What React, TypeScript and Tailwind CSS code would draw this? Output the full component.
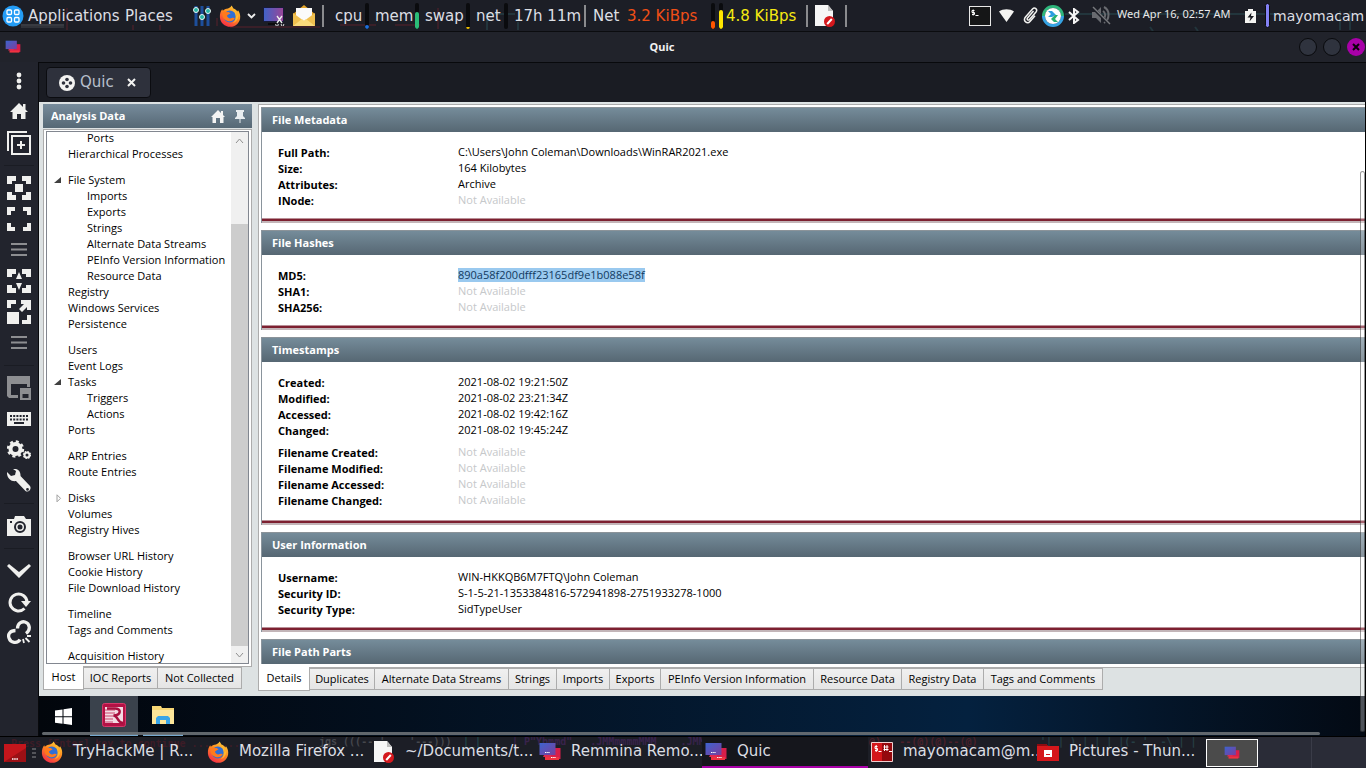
import React from "react";

type Children = { children?: React.ReactNode };

const remoteFont = "font-['Open_Sans','Noto_Sans',sans-serif]";
const panelFont = "font-['DejaVu_Sans',sans-serif]";

function Svg({ w, h, box, children, label }: { w: number; h: number; box?: string; label?: string } & Children) {
  return (
    <svg width={w} height={h} viewBox={box ?? `0 0 ${w} ${h}`} className="block shrink-0" aria-hidden={label ? undefined : true} aria-label={label}>
      {children}
    </svg>
  );
}

/* ---------- shared icons ---------- */

function Firefox({ id }: { id: string }) {
  return (
    <Svg w={22} h={22}>
      <defs>
        <linearGradient id={id} x1="0.8" y1="0" x2="0.2" y2="1">
          <stop offset="0" stopColor="#ffd43c" />
          <stop offset="0.45" stopColor="#ff8a1f" />
          <stop offset="1" stopColor="#f5254a" />
        </linearGradient>
      </defs>
      <path d="M12.5 0.5c1.2 1.4 1.5 2.4 2 3 1.8.6 3 1.800 3.800 3l.7-1.300c1.700 2.300 2.600 5 2.100 8.300C20.300 18.300 16.300 21.800 11.300 21.800 5.600 21.800 1.200 17.700.9 12.200.7 8.700 1.800 6 3.200 4.200l.7 1.600C5 4.500 6 4 7.500 3.700 9.500 3.400 11.500 2.800 12.500.5z" fill={`url(#${id})`} />
      <circle cx="10.800" cy="11.500" r="6" fill="#2f6fd6" />
      <path d="M3.500 8c1.500-2 3-2 4.500-.8 1.500-.4 2.500.3 3.500 1.300-2 .5-2.300 1.500-3.500 2 .2 2.300 2.500 3.500 4.800 2.600 1.200-.5 2.200-.3 3 .2-1.200 2.600-4.500 3.500-7.300 2.600C5 14.600 3 12 3.500 8z" fill="#ff7a1c" />
      <path d="M14 4.500c2.500 1.500 4 4 3.500 7 1-.8 1.500-2 1.500-3.200 1.200 4.500-1.500 9-5.500 10.200 4.500-3.500 4-9 .5-14z" fill="#ffc531" opacity=".75" />
    </Svg>
  );
}

function BlockedDoc() {
  return (
    <Svg w={22} h={24}>
      <path d="M1 1h13l5 6v15H1z" fill="#f6f6f6" />
      <path d="M14 1v6h5z" fill="#bdbdbd" />
      <circle cx="15.500" cy="17.500" r="5.500" fill="#d4181d" />
      <path d="M13.200 20l4.600-5" stroke="#fff" strokeWidth="2" />
    </Svg>
  );
}

function Remmina({ id, small }: { id: string; small?: boolean }) {
  return (
    <Svg w={small ? 16 : 22} h={small ? 14 : 20} box="0 0 22 20">
      <defs>
        <linearGradient id={id} x1="0" y1="0" x2="1" y2="1">
          <stop offset="0" stopColor="#3d63cf" />
          <stop offset="1" stopColor="#7a3f9d" />
        </linearGradient>
      </defs>
      <rect x="7" y="6" width="14.500" height="11" fill="#d81e4a" />
      <path d="M6 15h14v3H6z" fill="#ef3340" />
      <rect x="0.500" y="1" width="16" height="12" fill={`url(#${id})`} />
      <path d="M5 13h7v2H4z" fill="#e02a50" />
      {!small && <path d="M6 10.500h5M12 15.500h5" stroke="#fff" strokeDasharray="1.500 .7" />}
    </Svg>
  );
}

/* ---------- top panel ---------- */

function Label({ w, children, color = "text-[#dcdfe4]" }: { w: string; color?: string } & Children) {
  return <span className={`${w} ${color} shrink-0 whitespace-nowrap`}>{children}</span>;
}

function Meter({ fill, color }: { fill: string; color: string }) {
  return (
    <span className="flex h-[26px] w-1 shrink-0 items-end overflow-hidden rounded-sm bg-[#0a0b0e]">
      <span className={`w-full rounded-sm ${fill} ${color}`} />
    </span>
  );
}

function Divider() {
  return <span className="h-[22px] w-0.5 shrink-0 bg-[#8a8b8e]" />;
}

function TopPanel() {
  return (
    <header className={`${panelFont} relative flex h-8 shrink-0 items-center justify-between overflow-hidden border-b border-[#0b0c0f] bg-[#1c1e26] text-[15px]`}>
      <div className="absolute left-0 top-0 h-full w-full" aria-hidden="true">
        <svg className="h-full w-full">
          <g stroke="#47202a" strokeWidth="2" fill="none" opacity=".7">
            <path d="M67 8v22M133 25v5M160 25v5M217 18v8M230 27h90M340 25h36M395 25h25M438 8v21" />
          </g>
          <path d="M21 25h43" stroke="#55575c" />
          <path d="M21 27h43" stroke="#45474c" />
          <g stroke="#253f46" strokeWidth="2" fill="none" opacity=".7">
            <path d="M485 14h30M487 14v16M518 22v8M1065 14h210M1150 27l3 4M1195 27l3 4M1340 11v19M1350 11v19" />
          </g>
        </svg>
      </div>
      <div className="relative flex items-center pt-px">
        <button className="flex w-[122px] items-center gap-1 pl-[2px] text-[#dcdfe4]">
          <Svg w={22} h={22}>
            <circle cx="11" cy="11" r="10.500" fill="#239cf5" />
            <g fill="none" stroke="#fff" strokeWidth="1.300">
              <rect x="5" y="5" width="4.500" height="4.500" rx="1" />
              <rect x="12.500" y="5" width="4.500" height="4.500" rx="1" />
              <rect x="5" y="12.500" width="4.500" height="4.500" rx="1" />
              <rect x="12.500" y="12.500" width="4.500" height="4.500" rx="1" />
            </g>
          </Svg>
          Applications
        </button>
        <button className="w-[68px] pl-[3px] text-left text-[#dcdfe4]">Places</button>
        <button aria-label="Mixer" className="w-[28px] pl-[2px]">
          <Svg w={20} h={22}>
            <path d="M4 1v20M10 1v20M16 1v20" stroke="#1d4f9c" strokeWidth="3" />
            <g fill="#27b5a5" stroke="#e8f4f4" strokeWidth="1">
              <circle cx="4" cy="5" r="2.500" /><circle cx="10" cy="12" r="2.500" /><circle cx="16" cy="6" r="2.500" />
            </g>
          </Svg>
        </button>
        <button aria-label="Firefox" className="w-[29px] pl-[1px]"><Firefox id="ff0" /></button>
        <button aria-label="More browsers" className="w-[16px]">
          <Svg w={9} h={6}><path d="M1 1l3.500 3.500L8 1" fill="none" stroke="#eee" strokeWidth="1.800" /></Svg>
        </button>
        <button aria-label="Screenshot" className="w-[30px]">
          <Svg w={22} h={20}>
            <defs><linearGradient id="shot"><stop stopColor="#3f63c8" /><stop offset="1" stopColor="#9b4597" /></linearGradient></defs>
            <rect x="0.500" y="1.500" width="20" height="14" fill="url(#shot)" stroke="#181a3a" />
            <path d="M5 18h9" stroke="#0b0b0d" strokeWidth="2" />
            <path d="M14 10l5 7M19 10l-5 7" stroke="#eee" strokeWidth="1.300" />
            <path d="M13 18a1.300 1.300 0 1 0 2 0M18.500 18a1.300 1.300 0 1 0 2 0" stroke="#ddd" fill="none" />
          </Svg>
        </button>
        <button aria-label="Mail" className="w-[29px]">
          <Svg w={22} h={22}>
            <path d="M0 9l11-9 11 9v12H0z" fill="#e3a52b" />
            <path d="M3 3h16v9l-8 5-8-5z" fill="#fbfbfb" />
            <path d="M0 8l11 8 11-8v13H0z" fill="#f0c050" />
            <path d="M0 21l9-7 2 2 2-2 9 7z" fill="#fadb7c" />
          </Svg>
        </button>
        <Divider />
        <Label w="w-[41px] pl-[11px]">cpu</Label>
        <Meter fill="h-[4px]" color="bg-[#1f6fdc]" />
        <Label w="w-[46px] pl-[6px]">mem</Label>
        <Meter fill="h-[17px]" color="bg-[#2bbd78]" />
        <Label w="w-[47px] pl-[6px]">swap</Label>
        <Meter fill="h-[2px]" color="bg-[#f2c200]" />
        <Label w="w-[34px] pl-[6px]">net</Label>
        <Meter fill="h-0" color="bg-black" />
        <Label w="w-[76px] pl-[6px]">17h 11m</Label>
        <Divider />
        <Label w="w-[41px] pl-[7px]">Net</Label>
        <Label w="w-[84px]" color="text-[#f04f16]">3.2 KiBps</Label>
        <Meter fill="h-[8px]" color="bg-[#ff5500]" />
        <span className="w-1" />
        <Meter fill="h-[19px]" color="bg-[#ffe600]" />
        <Label w="w-[83px] pl-[3px]" color="text-[#f5ea12]">4.8 KiBps</Label>
        <Divider />
        <span className="w-[37px] pl-[6px]"><BlockedDoc /></span>
        <Divider />
      </div>
      <div className="relative flex items-center">
        <button aria-label="Terminal" className="w-[30px]">
          <Svg w={22} h={20}>
            <rect x="0.500" y="0.500" width="21" height="19" fill="#151617" stroke="#e8e8e8" />
            <path d="M5.500 4.500H3v2h2.500v2H3M4.200 3.500v6M6.500 9.500h3" stroke="#fff" fill="none" />
          </Svg>
        </button>
        <span className="w-[24px]"><Svg w={15} h={13}><path d="M0 2.500C4-.5 11-.5 15 2.500L7.500 13z" fill="#f4f4f2" /></Svg></span>
        <span className="w-[19px]">
          <Svg w={15} h={17}><path d="M10.500 4L4.500 11c-1 1.500.8 2.800 2 1.500l6.500-7.500c2-2.800-1.300-5.300-3.500-3L2.500 10c-3 4 1.800 7.500 4.500 4.500l5-5.800" fill="none" stroke="#f2f2f0" strokeWidth="1.500" /></Svg>
        </span>
        <span className="w-[26px]">
          <Svg w={22} h={22}>
            <path d="M1.500 11a9.500 9.500 0 0 1 19 0" fill="none" stroke="#2fb67c" strokeWidth="3" />
            <path d="M1.500 11a9.500 9.500 0 0 0 19 0" fill="none" stroke="#36a3e3" strokeWidth="3" />
            <circle cx="11" cy="11" r="8" fill="#fff" />
            <path d="M6 6h4l4 4-4 2H6l3-3z" fill="#2d9ee0" /><path d="M16 10h-3l-4 4 3 3h4l-3-3z" fill="#28b070" />
          </Svg>
        </span>
        <span className="w-[23px]"><Svg w={12} h={16}><path d="M1 4l9 8-4 3V1l4 3-9 8" fill="none" stroke="#f4f4f4" strokeWidth="2" /></Svg></span>
        <span className="w-[26px]">
          <Svg w={20} h={19}>
            <path d="M1 6h4l5-5v16l-5-5H1z" fill="#696b70" />
            <path d="M12 5c3 2 3 6 0 8M13 1c6 3 6 12 0 16" fill="none" stroke="#696b70" strokeWidth="2" />
            <path d="M1 1l17 17" stroke="#1c1e26" strokeWidth="3" /><path d="M2 1l17 17" stroke="#77797d" strokeWidth="1.500" />
          </Svg>
        </span>
        <time className="w-[128px] whitespace-nowrap pb-[3px] font-['Noto_Sans',sans-serif] text-[11px] text-[#e9e9e9]">Wed Apr 16, 02:57 AM</time>
        <span className="w-[20px]"><Svg w={11} h={14}><path d="M0 2h3V0h5v2h3v12H0z" fill="#f4f4f2" /><path d="M6.500 3.500L2.500 8.500h3l-1 4 4.500-5.500H6z" fill="#17191f" /></Svg></span>
        <span className="h-[25px] w-[5px] rounded-sm border border-[#0b0c10] bg-[#8381f4]" />
        <span className="w-[96px] whitespace-nowrap pl-[3px] text-sm text-[#dcdfe4]">mayomacam</span>
      </div>
    </header>
  );
}

function TitleBar() {
  return (
    <div className="flex h-[30px] shrink-0 items-center justify-between bg-[#21232b] pl-[5px]">
      <div className="w-5"><Remmina id="rm0" small /></div>
      <h1 className="font-['Noto_Sans',sans-serif] text-[11px] font-bold text-[#f1f1f1]">Quic</h1>
      <div className="flex w-[67px] gap-[6px]">
        <button aria-label="Minimise" className="size-[18px] shrink-0 rounded-full border border-[#090a0d] bg-[#2f333e]" />
        <button aria-label="Maximise" className="size-[18px] shrink-0 rounded-full border border-[#090a0d] bg-[#2f333e]" />
        <button aria-label="Close" className="flex size-[18px] shrink-0 items-center justify-center rounded-full bg-[#a800a8]">
          <Svg w={8} h={8}><path d="M1 1l6 6M7 1L1 7" stroke="#08000a" strokeWidth="2" /></Svg>
        </button>
      </div>
    </div>
  );
}

/* ---------- Remmina side toolbar ---------- */

const corners = "M0 8V0h9v5H5v3zM15 0h9v8h-5V5h-4zM0 16h5v3h4v5H0zM19 16h5v8h-9v-5h4z";

function ToolButton({ label, children }: { label: string } & Children) {
  return <button aria-label={label} className="flex h-[31px] items-center justify-center">{children}</button>;
}

function ToolGap() {
  return <span className="flex h-[14px] items-center px-1"><span className="h-px w-full bg-[#1a1c23]" /></span>;
}

function Toolbar() {
  const on = "#f0f0ee";
  const off = "#8d8e91";
  const lines = <Svg w={16} h={15}><path d="M0 2h16M0 7.500h16M0 13h16" stroke={off} strokeWidth="2" /></Svg>;
  return (
    <nav aria-label="Connection tools" className="flex w-[38px] shrink-0 flex-col bg-[#22242d] pt-[3px]">
      <ToolButton label="Menu"><Svg w={6} h={18}><g fill={on}><circle cx="3" cy="3" r="2.400" /><circle cx="3" cy="9" r="2.400" /><circle cx="3" cy="15" r="2.400" /></g></Svg></ToolButton>
      <ToolButton label="Home"><Svg w={18} h={17}><path d="M0 9L9 0l4 4V1h2.500v5.500L18 9h-2.500v7H11v-5H7v5H2.500V9z" fill={on} /></Svg></ToolButton>
      <ToolButton label="Duplicate connection">
        <Svg w={24} h={24}><path d="M1 20V1h19" fill="none" stroke={on} strokeWidth="2" /><rect x="5" y="5" width="18" height="18" fill="none" stroke={on} strokeWidth="2" /><path d="M14 10v8M10 14h8" stroke={on} strokeWidth="2" /></Svg>
      </ToolButton>
      <ToolGap />
      <ToolButton label="Fit window"><Svg w={24} h={24}><path d={corners} fill={on} /><path d="M8 8h8v8H8z" fill={on} /></Svg></ToolButton>
      <ToolButton label="Full screen"><Svg w={24} h={24}><path d="M0 8V0h8v4H4v4zM16 0h8v8h-4V4h-4zM0 16h4v4h4v4H0zM20 16h4v8h-8v-4h4z" fill={on} /></Svg></ToolButton>
      <ToolButton label="Full screen options">{lines}</ToolButton>
      <ToolButton label="Dynamic resolution"><Svg w={24} h={24}><path d={corners} fill={on} /><path d="M12 3l3 7H9zM12 21l3-7H9z" fill={on} /></Svg></ToolButton>
      <ToolButton label="Scaled mode"><Svg w={24} h={24}><path d="M0 8V0h9v4H4v4zM0 12h12v12H0zM14 0h10v10h-4V7l-5 5-3-3 5-5h-3zM20 15h4v9h-9v-4h5z" fill={on} /></Svg></ToolButton>
      <ToolButton label="Scale options">{lines}</ToolButton>
      <ToolGap />
      <ToolButton label="Multi monitor"><Svg w={24} h={24}><path d="M0 0h23v11h-3V8H4v11h7v3H2l-2-2z" fill={off} /><path d="M13 12h11v12H13zM15.500 18v4h6v-4z" fill={off} fillRule="evenodd" /></Svg></ToolButton>
      <ToolButton label="Grab keyboard">
        <Svg w={24} h={14}><path d="M0 0h24v14H0z" fill={on} /><path d="M3 4h18M3 7.500h18" stroke="#22242d" strokeWidth="2" strokeDasharray="2 1.200" /><path d="M7 11h10" stroke="#22242d" strokeWidth="2" /></Svg>
      </ToolButton>
      <ToolButton label="Preferences">
        <Svg w={24} h={20}>
          <circle cx="8.500" cy="9" r="5" fill="none" stroke={on} strokeWidth="4" /><circle cx="8.500" cy="9" r="7.500" fill="none" stroke={on} strokeWidth="2.400" strokeDasharray="3 2.900" />
          <circle cx="20" cy="15" r="2.500" fill="none" stroke={on} strokeWidth="2" /><circle cx="20" cy="15" r="3.500" fill="none" stroke={on} strokeWidth="1.200" strokeDasharray="1.400 1.350" />
        </Svg>
      </ToolButton>
      <ToolButton label="Tools"><Svg w={24} h={24}><path d="M0 3l4 4 4-1 1-4-3-2c4-1 8 2 7.500 7l9.500 10c2 3-1.500 7-4.500 5L9 12C4 13-.5 8.500 0 3zM20.500 19a1.400 1.400 0 1 0 0 2.800 1.400 1.400 0 0 0 0-2.800z" fill={on} fillRule="evenodd" /></Svg></ToolButton>
      <ToolGap />
      <ToolButton label="Screenshot"><Svg w={24} h={20}><path d="M0 3h7l1-3h9l2 3h5v17H0z" fill={on} /><circle cx="13" cy="11" r="5" fill="none" stroke="#22242d" strokeWidth="2" /><circle cx="13" cy="11" r="2.500" fill="#22242d" /><path d="M2 1h3M3 6h2" stroke="#22242d" strokeWidth="2" /></Svg></ToolButton>
      <ToolGap />
      <ToolButton label="Minimise"><Svg w={24} h={14}><path d="M0 2l2-2 10 8 10-8 2 2-12 12z" fill={on} /></Svg></ToolButton>
      <ToolButton label="Reconnect"><Svg w={24} h={22}><path d="M17.500 17.500A8.500 8.500 0 1 1 20 11" fill="none" stroke={on} strokeWidth="3" /><path d="M14 10h10l-5 6z" fill={on} /></Svg></ToolButton>
      <ToolButton label="Disconnect">
        <Svg w={24} h={25}>
          <path d="M10.500 8.500c0-5 4-7.500 7.500-6.500 5 1.500 6 8 1 11.500" fill="none" stroke={on} strokeWidth="3.300" />
          <path d="M8.500 10.500c-5 0-8 3.500-6.500 7.500 1.500 5 8.500 6 11 1.500" fill="none" stroke={on} strokeWidth="3.300" />
          <path d="M16 19l1 4M18.500 18l4 4M20 16h4" stroke={on} strokeWidth="1.800" />
        </Svg>
      </ToolButton>
    </nav>
  );
}

/* ---------- remote session: analysis data ---------- */

type Node = { text: string; level?: 1; gap?: boolean; mark?: "open" | "closed" };

const tree: Node[] = [
  { text: "Ports", level: 1 },
  { text: "Hierarchical Processes" },
  { text: "File System", gap: true, mark: "open" },
  { text: "Imports", level: 1 },
  { text: "Exports", level: 1 },
  { text: "Strings", level: 1 },
  { text: "Alternate Data Streams", level: 1 },
  { text: "PEInfo Version Information", level: 1 },
  { text: "Resource Data", level: 1 },
  { text: "Registry" },
  { text: "Windows Services" },
  { text: "Persistence" },
  { text: "Users", gap: true },
  { text: "Event Logs" },
  { text: "Tasks", mark: "open" },
  { text: "Triggers", level: 1 },
  { text: "Actions", level: 1 },
  { text: "Ports" },
  { text: "ARP Entries", gap: true },
  { text: "Route Entries" },
  { text: "Disks", gap: true, mark: "closed" },
  { text: "Volumes" },
  { text: "Registry Hives" },
  { text: "Browser URL History", gap: true },
  { text: "Cookie History" },
  { text: "File Download History" },
  { text: "Timeline", gap: true },
  { text: "Tags and Comments" },
  { text: "Acquisition History", gap: true },
];

function TreeRow({ node }: { node: Node }) {
  return (
    <li className={`flex h-4 items-center ${node.gap ? "mt-[10px]" : ""} ${node.level ? "pl-10" : "pl-[7px]"}`}>
      {!node.level && (
        <span className="w-[14px] shrink-0">
          {node.mark === "open" && <Svg w={7} h={7}><path d="M7 0v6H0z" fill="#404040" /></Svg>}
          {node.mark === "closed" && <Svg w={8} h={9}><path d="M3 .8v7L6.500 4.300z" fill="#fff" stroke="#a0a0a0" /></Svg>}
        </span>
      )}
      <a href="#" className="whitespace-nowrap">{node.text}</a>
    </li>
  );
}

function Tab({ w, active, children }: { w: string; active?: boolean } & Children) {
  return active ? (
    <button role="tab" aria-selected="true" className={`${w} -mt-px h-6 shrink-0 border border-t-0 border-[#acacac] bg-white whitespace-nowrap`}>{children}</button>
  ) : (
    <button role="tab" aria-selected="false" className={`${w} h-[22px] shrink-0 border border-l-0 border-[#acacac] bg-linear-to-b from-[#f0f0f0] to-[#e5e5e5] whitespace-nowrap`}>{children}</button>
  );
}

function AnalysisPanel() {
  return (
    <aside className="flex w-[209px] shrink-0 flex-col">
      <div className="flex h-6 shrink-0 items-center bg-linear-to-b from-[#778c9c] to-[#566875] pl-2 pr-[7px] pt-px">
        <h2 className="grow font-bold text-white">Analysis Data</h2>
        <button aria-label="Home" className="mr-[10px]"><Svg w={14} h={13}><path d="M0 7l7-7 3 3V1h2v4l2 2h-1.500v6H9V8H5v5H1.500V7z" fill="#f4f4f4" /></Svg></button>
        <button aria-label="Pin"><Svg w={10} h={13}><path d="M1 0h8v2H8v4l2 2v1H0V8l2-2V2H1zM4.500 9h1v4h-1z" fill="#e8ecef" /></Svg></button>
      </div>
      <div className="mt-px flex min-h-0 grow border border-[#acacac] bg-white px-[2px] pb-[2px] pt-px">
        <div className="flex min-w-0 grow border border-[#828790]">
          <ul className="min-w-0 grow overflow-hidden">
            <li className="-mt-0.5" aria-hidden="true" />
            {tree.map((n, i) => <TreeRow key={i} node={n} />)}
          </ul>
          <div className="flex w-[17px] shrink-0 flex-col items-center bg-[#f0f0f0]" aria-hidden="true">
            <span className="flex h-[92px] pt-[6px]"><Svg w={9} h={6}><path d="M1 5l3.500-4L8 5" fill="none" stroke="#8f8f8f" /></Svg></span>
            <span className="w-full grow bg-[#cdcdcd]" />
            <span className="flex h-[17px] items-center"><Svg w={9} h={6}><path d="M1 1l3.500 4L8 1" fill="none" stroke="#8f8f8f" /></Svg></span>
          </div>
        </div>
      </div>
      <div role="tablist" className="flex h-[29px] shrink-0">
        <Tab w="w-[41px]" active>Host</Tab>
        <Tab w="w-[74px]">IOC Reports</Tab>
        <Tab w="w-[84px]">Not Collected</Tab>
      </div>
    </aside>
  );
}

type Field = [string, string, boolean?];

function Fields({ rows }: { rows: Field[] }) {
  return (
    <dl>
      {rows.map(([name, value, selected]) => (
        <div key={name} className="flex h-4 items-start">
          <dt className="w-[180px] shrink-0 font-bold leading-4">{name}</dt>
          <dd className={`whitespace-nowrap leading-[14px] ${value === "Not Available" ? "text-[#c6c8ca]" : selected ? "bg-[#99c9ef] text-[#123a60]" : ""}`}>{value}</dd>
        </div>
      ))}
    </dl>
  );
}

function Section({ title, children }: { title: string } & Children) {
  return (
    <section className="mb-[7px] shrink-0 border-l border-[#8a949c]">
      <h2 className="flex h-[25px] items-center border-t border-[#8b9399] bg-linear-to-b from-[#758c9a] to-[#566773] pl-[10px] pt-px font-bold text-white">{title}</h2>
      {children && (
        <>
          <div className="flex flex-col gap-1.5 pb-[9px] pl-4 pt-[13px]">{children}</div>
          <div className="h-[5px] border-b-2 border-t border-b-[#c3b5b8] border-t-[#b98f97] bg-[#7d2030]" />
        </>
      )}
    </section>
  );
}

const none = "Not Available";

function DetailsPanel() {
  return (
    <main className="flex min-w-0 grow flex-col">
      <div className="min-h-0 grow overflow-hidden border-l border-t border-[#acacac] bg-white pl-[2px] pt-[2px]">
        <Section title="File Metadata">
          <Fields rows={[["Full Path:", "C:\\Users\\John Coleman\\Downloads\\WinRAR2021.exe"], ["Size:", "164 Kilobytes"], ["Attributes:", "Archive"], ["INode:", none]]} />
        </Section>
        <Section title="File Hashes">
          <Fields rows={[["MD5:", "890a58f200dfff23165df9e1b088e58f", true], ["SHA1:", none], ["SHA256:", none]]} />
        </Section>
        <Section title="Timestamps">
          <Fields rows={[["Created:", "2021-08-02 19:21:50Z"], ["Modified:", "2021-08-02 23:21:34Z"], ["Accessed:", "2021-08-02 19:42:16Z"], ["Changed:", "2021-08-02 19:45:24Z"]]} />
          <div className="pb-0.5">
            <Fields rows={[["Filename Created:", none], ["Filename Modified:", none], ["Filename Accessed:", none], ["Filename Changed:", none]]} />
          </div>
        </Section>
        <Section title="User Information">
          <Fields rows={[["Username:", "WIN-HKKQB6M7FTQ\\John Coleman"], ["Security ID:", "S-1-5-21-1353384816-572941898-2751933278-1000"], ["Security Type:", "SidTypeUser"]]} />
        </Section>
        <Section title="File Path Parts" />
      </div>
      <div role="tablist" className="flex h-[29px] shrink-0 border-t border-[#acacac]">
        <Tab w="w-[52px]" active>Details</Tab>
        <Tab w="w-[65px]">Duplicates</Tab>
        <Tab w="w-[134px]">Alternate Data Streams</Tab>
        <Tab w="w-[48px]">Strings</Tab>
        <Tab w="w-[53px]">Imports</Tab>
        <Tab w="w-[51px]">Exports</Tab>
        <Tab w="w-[153px]">PEInfo Version Information</Tab>
        <Tab w="w-[88px]">Resource Data</Tab>
        <Tab w="w-[82px]">Registry Data</Tab>
        <Tab w="w-[119px]">Tags and Comments</Tab>
      </div>
    </main>
  );
}

function WindowsTaskbar() {
  return (
    <div className="relative flex h-10 shrink-0 items-stretch bg-linear-to-r from-[#02060c] via-[#04213f] via-70% to-[#030a14]">
      <button aria-label="Start" className="flex w-[51px] items-center justify-center pr-[3px]">
        <Svg w={17} h={17}><path d="M0 2.500l7.500-1v6.700H0zM8.500 1.300L17 0v8.200H8.500zM0 9.200h7.500v6.500l-7.500-1zM8.500 9.200H17V17l-8.500-1.200z" fill="#fff" /></Svg>
      </button>
      <button aria-label="Redline" className="flex w-12 items-center justify-center border-b-2 border-[#76a9d0] bg-[#3a424c]">
        <Svg w={24} h={24}>
          <rect x="0.500" y="0.500" width="23" height="23" rx="2" fill="#b31245" stroke="#d6386a" />
          <path d="M3 4h18v16H3z" fill="#f3dbe3" />
          <path d="M3 7h10M3 10h10M3 13h10M3 16h8M3 19h8" stroke="#c9466f" />
          <path d="M5 5.500h8c6.500 0 6.500 6.500-1.500 7 5 0 3 7 9.500 7.500" fill="none" stroke="#a80f3e" strokeWidth="2.500" />
        </Svg>
      </button>
      <button aria-label="File Explorer" className="ml-[5px] flex w-10 items-center justify-center border-b-2 border-[#76a9d0]">
        <Svg w={22} h={18}><path d="M0 0h9l1 2h12v16H0z" fill="#f8d775" /><path d="M0 4h22v14H0z" fill="#fde69a" /><path d="M4 18v-6l2-2h10l2 2v6h-4v-4H8v4z" fill="#3aa5e8" /></Svg>
      </button>
      <span className="absolute bottom-px left-[3px] right-[45px] h-[3px] rounded-full bg-[#6b7175]/90" />
    </div>
  );
}

function RemoteSession() {
  return (
    <div className={`${remoteFont} relative flex min-h-0 grow flex-col border-r border-black text-[11px] text-black`}>
      <div className="flex min-h-0 grow gap-[6px] bg-[#dde2e3] pl-[4px] pt-[2px]">
        <AnalysisPanel />
        <DetailsPanel />
      </div>
      <WindowsTaskbar />
      <span className="absolute bottom-1 right-0 top-[69px] w-[5px] rounded-full border border-black/40 bg-white/30" />
    </div>
  );
}

/* ---------- bottom panel ---------- */

function Task({ icon, active, children }: { icon: React.ReactNode; active?: boolean } & Children) {
  return (
    <button className={`flex min-w-0 flex-1 items-center gap-[10px] border-b-2 pl-[3px] text-left ${active ? "border-[#a800a8] bg-[#15161c]" : "border-transparent"}`}>
      {icon}
      <span className="whitespace-nowrap">{children}</span>
    </button>
  );
}

function BottomPanel() {
  return (
    <footer className={`${panelFont} relative flex h-8 shrink-0 overflow-hidden border-t border-black bg-[#1c1e26] text-[15px] text-[#dcdfe4]`}>
      <div className="absolute inset-x-0 top-0 whitespace-pre font-['DejaVu_Sans_Mono',monospace] text-[10px] font-bold leading-[10px]" aria-hidden="true">
        <span className="absolute left-[11px] top-0.5 text-[#3d1c26]">Press [Enter] key to continue ..............</span>
        <span className="absolute left-[319px] top-0 text-[#45474d]">{"jgs (((---'    '---)))"}</span>
        <span className="absolute left-[463px] top-0 text-[#20474b]">|_|</span>
        <span className="absolute left-[512px] top-0 text-[#39234c]">{"| P\"Ybmmd\"   .JMMmmmmMMM    .JMML"}</span>
        <span className="absolute left-[845px] top-0 text-[#4b202a]">{"(@)(@)   --(@)(@)--(@)"}</span>
        <span className="absolute left-[1040px] top-0 text-[#263f45]">{"'| | ) | | | |(- ' _-\\ | |"}</span>
      </div>
      <div className="relative flex min-w-0 grow">
        <button aria-label="Menu" className="flex w-[38px] shrink-0 items-center gap-[6px] pl-1">
          <Svg w={22} h={18}><path d="M0 0h22v18H0z" fill="#c4161c" /><path d="M0 18L22 4v14z" fill="#9b1015" /><path d="M8 15h6" stroke="#fff" strokeWidth="1.500" strokeDasharray="1.500 .7" /></Svg>
          <Svg w={4} h={10}><path d="M0 1h4M0 5h4M0 9h4" stroke="#8a8b8e" /></Svg>
        </button>
        <Task icon={<Firefox id="ff1" />}>TryHackMe | R...</Task>
        <Task icon={<Firefox id="ff2" />}>Mozilla Firefox ...</Task>
        <Task icon={<BlockedDoc />}>~/Documents/t...</Task>
        <Task icon={<Remmina id="rm1" />}>Remmina Remo...</Task>
        <Task icon={<Remmina id="rm2" />} active>Quic</Task>
        <Task icon={<Svg w={22} h={20}><path d="M.5.5h21v19H.5z" fill="#d4171b" stroke="#f0d0d0" /><path d="M11 1h10v18H11z" fill="#94090e" /><path d="M6.500 4.500H4v2h2.500v2H4M5.200 3v7M7.500 9.500h3M13.500 3v6M16 3v6M12.500 5h5M12.500 7.500h5M18 9.500h3" stroke="#fff" fill="none" /></Svg>}>mayomacam@m...</Task>
        <Task icon={<Svg w={22} h={18}><path d="M0 1h9l2 2h11v15H0z" fill="#d4171b" /><path d="M0 1h9l2 2H0z" fill="#8d0b10" /><path d="M7 7h8v7H7z" fill="#fff" /><path d="M9 11h4v1H9z" fill="#d4171b" /></Svg>}>Pictures - Thun...</Task>
      </div>
      <div className="relative flex w-[166px] shrink-0 items-stretch pl-[6px]">
        <button aria-label="Workspace 1" className="mb-px mt-0.5 flex w-[52px] items-center justify-center border border-white bg-[#4b4b4b]"><Remmina id="rm3" small /></button>
        <button aria-label="Workspace 2" className="w-[54px] border-r border-[#3a3c48] bg-[#2a2c37]" />
        <button aria-label="Workspace 3" className="grow bg-[#2a2c37]" />
      </div>
    </footer>
  );
}

export default function App() {
  return (
    <div className="flex h-screen flex-col overflow-hidden bg-[#1c1e26]">
      <TopPanel />
      <TitleBar />
      <div className="flex min-h-0 grow">
        <Toolbar />
        <div className="flex min-w-0 grow flex-col border-l border-t border-[#08090c]">
          <div role="tablist" className="flex h-[39px] shrink-0 items-center bg-[#1a1c23] pl-[7px]">
            <div className={`${panelFont} flex h-[31px] w-[105px] items-center rounded-sm border border-[#0b0c10] bg-[#2e313c] pl-3 text-[15px] text-[#b9c0cc]`}>
              <button role="tab" aria-selected="true" className="flex items-center gap-[5px]">
                <Svg w={16} h={16}><circle cx="8" cy="8" r="8" fill="#f3f3f1" /><g fill="#2e313c"><circle cx="8" cy="4.500" r="1.800" /><circle cx="8" cy="11.500" r="1.800" /><circle cx="4.500" cy="8" r="1.800" /><circle cx="11.500" cy="8" r="1.800" /></g></Svg>
                Quic
              </button>
              <button aria-label="Close tab" className="ml-[13px]"><Svg w={9} h={9}><path d="M1 1l7 7M8 1L1 8" stroke="#f3f3f1" strokeWidth="2" /></Svg></button>
            </div>
          </div>
          <RemoteSession />
        </div>
      </div>
      <BottomPanel />
    </div>
  );
}
